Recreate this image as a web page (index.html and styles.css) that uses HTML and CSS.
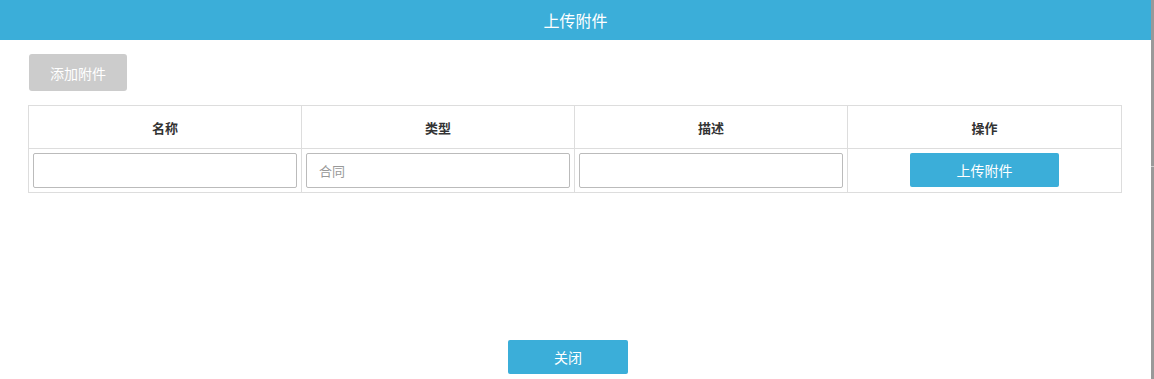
FILE: index.html
```html
<!DOCTYPE html>
<html lang="zh-CN">
<head>
  <meta charset="UTF-8" />
  <meta name="viewport" content="width=device-width, initial-scale=1.0"/>
  <title>上传附件</title>
  <link rel="stylesheet" href="styles.css">
</head>
<body>
  <div class="dialog">
    <div class="dialog-header">上传附件</div>

    <div class="dialog-body">
      <button class="add-btn" disabled>添加附件</button>

      <table class="attach-table">
        <colgroup>
          <col class="col-std" />
          <col class="col-std" />
          <col class="col-std" />
          <col />
        </colgroup>
        <thead>
          <tr>
            <th>名称</th>
            <th>类型</th>
            <th>描述</th>
            <th>操作</th>
          </tr>
        </thead>
        <tbody>
          <tr>
            <td><input type="text" class="cell-input" /></td>
            <td><input type="text" class="cell-input" placeholder="合同" /></td>
            <td><input type="text" class="cell-input" /></td>
            <td class="op-cell"><button class="upload-btn">上传附件</button></td>
          </tr>
        </tbody>
      </table>
    </div>

    <div class="dialog-footer">
      <button class="close-btn">关闭</button>
    </div>
  </div>
  <div class="edge"></div>
</body>
</html>
```

FILE: styles.css
```css
body {
  margin: 0;
  display: flex;
  height: 379px;
  overflow: hidden;
  font-family: "Noto Sans CJK SC", "Liberation Sans", sans-serif;
  background: #fff;
  color: #333;
}

.dialog {
  flex: 1;
  display: flex;
  flex-direction: column;
}

.edge {
  width: 3px;
  background: linear-gradient(#999 0, #999 166px, #ccc 166px, #ccc 167px, #999 167px);
}

.dialog-header {
  height: 40px;
  line-height: 40px;
  background: #3baed9;
  color: #fff;
  text-align: center;
  font-size: 16px;
}

.dialog-body {
  padding: 14px 29px 0 28px;
}

.add-btn {
  display: block;
  margin-left: 1px;
  width: 98px;
  height: 37px;
  border: none;
  border-radius: 3px;
  background: #cccccc;
  color: #fff;
  font-family: inherit;
  font-size: 14px;
  padding: 0;
}

.attach-table {
  width: 100%;
  margin-top: 14px;
  border-collapse: collapse;
  table-layout: fixed;
}

.col-std {
  width: 273px;
}

.attach-table th,
.attach-table td {
  border: 1px solid #dddddd;
}

.attach-table th {
  height: 42px;
  padding: 0;
  font-size: 13px;
  font-weight: bold;
  color: #333;
}

.attach-table td {
  padding: 4px;
  vertical-align: top;
}

.cell-input {
  display: block;
  box-sizing: border-box;
  width: 100%;
  height: 35px;
  border: 1px solid #bbbbbb;
  border-radius: 2px;
  padding: 0 12px;
  font-family: inherit;
  font-size: 13px;
  outline: none;
}

.cell-input::placeholder {
  color: #999;
}

.op-cell {
  text-align: center;
}

.upload-btn,
.close-btn {
  border: none;
  border-radius: 2px;
  background: #3baed9;
  color: #fff;
  font-family: inherit;
  font-size: 14px;
  padding: 0;
}

.upload-btn {
  width: 149px;
  height: 34px;
  vertical-align: top;
}

.dialog-footer {
  margin-top: auto;
  padding: 0 15px 5px 0;
  text-align: center;
}

.close-btn {
  width: 120px;
  height: 34px;
}
```
